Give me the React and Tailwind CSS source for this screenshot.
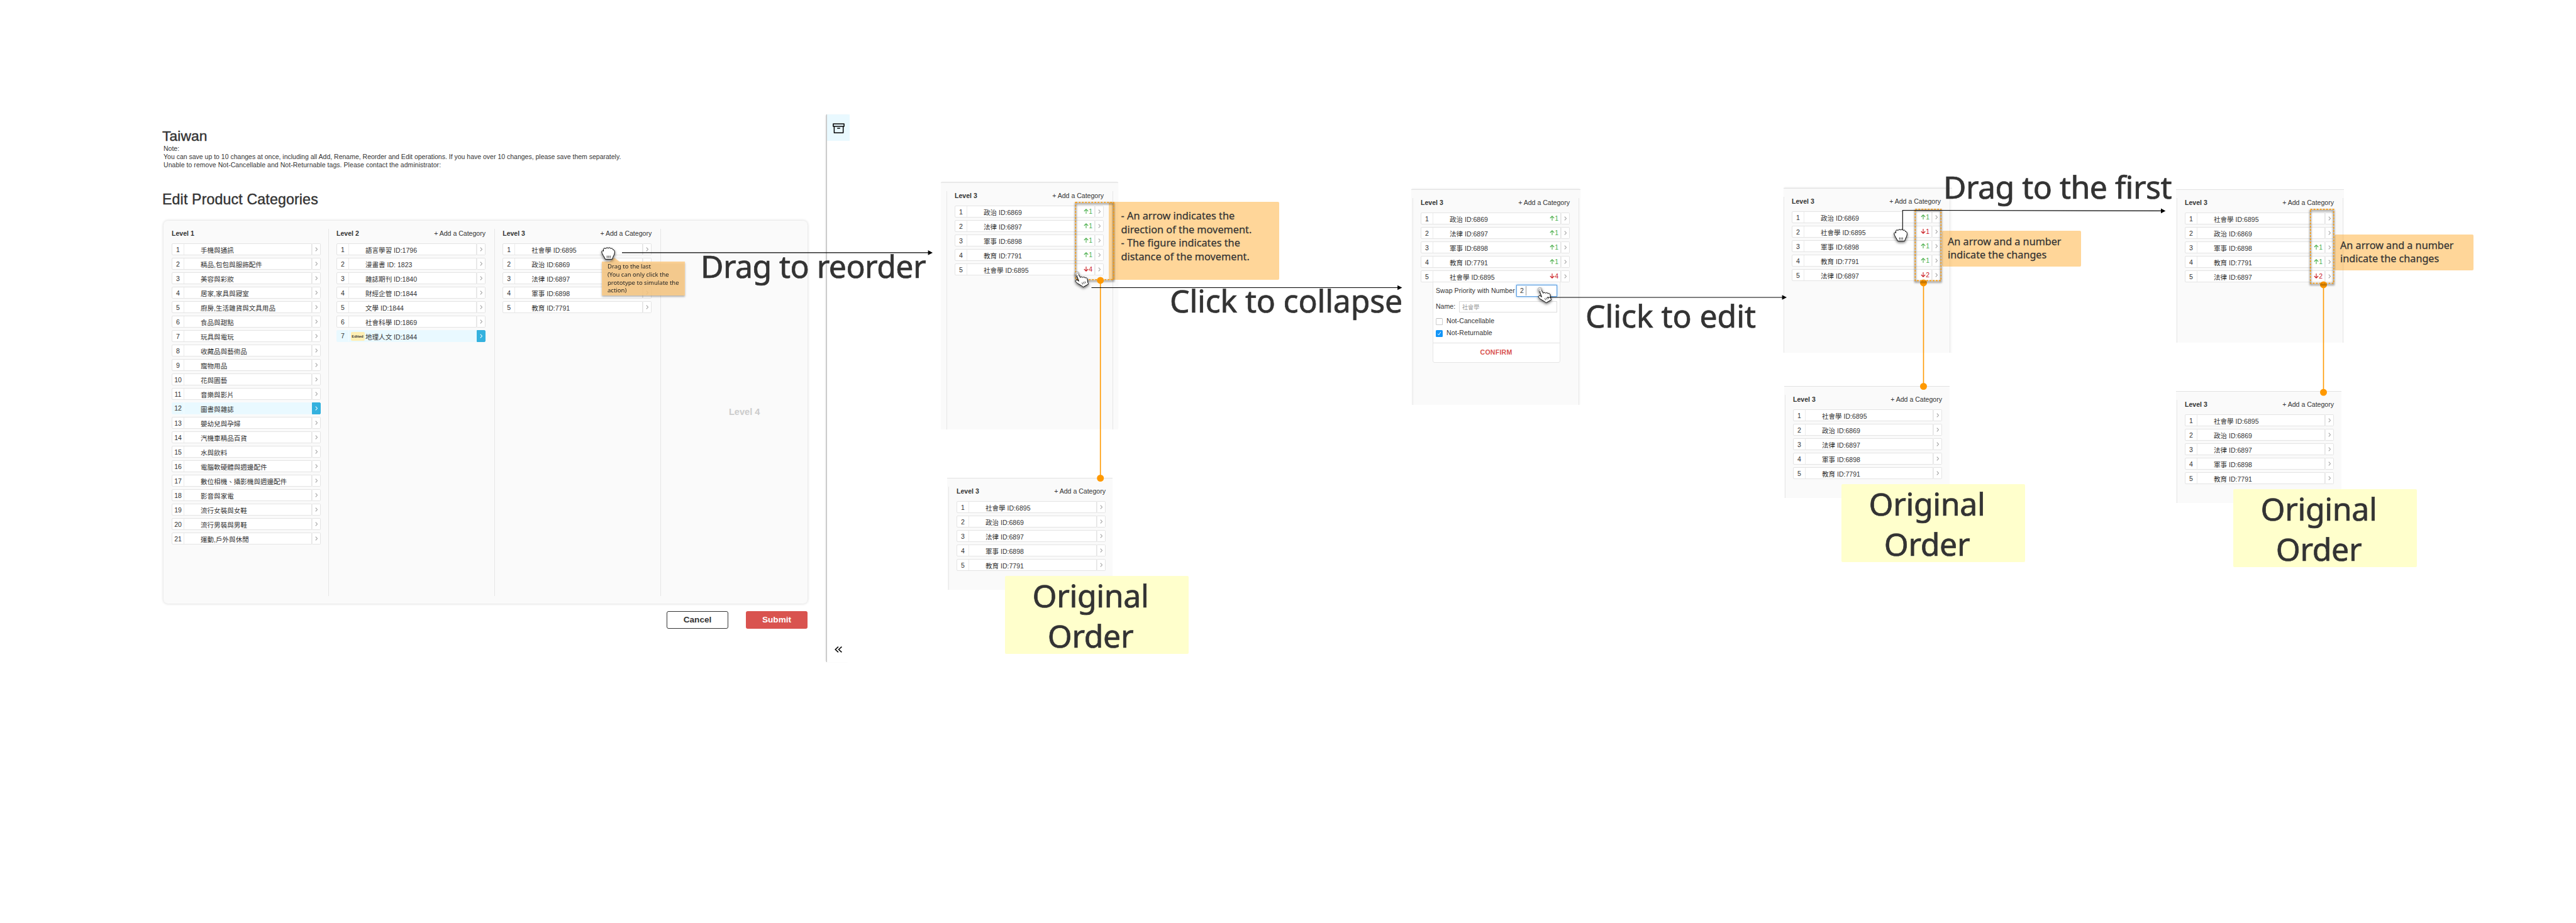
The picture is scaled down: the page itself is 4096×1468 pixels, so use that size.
import clsx from "clsx";

const SANS = "font-['Liberation_Sans','Noto_Sans_CJK_TC',sans-serif]";
const NOTE = "font-['Noto_Sans',sans-serif]";

const LEVEL_1 = [
  "手機與通訊", "精品,包包與服飾配件", "美容與彩妝", "居家,家具與寢室", "廚房,生活雜貨與文具用品",
  "食品與甜點", "玩具與電玩", "收藏品與藝術品", "寵物用品", "花與園藝", "音樂與影片", "圖書與雜誌",
  "嬰幼兒與孕婦", "汽機車精品百貨", "水與飲料", "電腦軟硬體與週邊配件", "數位相機、攝影機與週邊配件",
  "影音與家電", "流行女裝與女鞋", "流行男裝與男鞋", "運動,戶外與休閒",
].map((name, i) => ({ name, active: i === 11 }));

const LEVEL_2 = [
  { name: "語言學習 ID:1796" },
  { name: "漫畫書 ID: 1823" },
  { name: "雜誌期刊 ID:1840" },
  { name: "財經企管 ID:1844" },
  { name: "文學 ID:1844" },
  { name: "社會科學 ID:1869" },
  { name: "地理人文 ID:1844", active: true, edited: true },
];

const SOCIOLOGY = "社會學 ID:6895";
const POLITICS = "政治 ID:6869";
const LAW = "法律 ID:6897";
const MILITARY = "軍事 ID:6898";
const EDUCATION = "教育 ID:7791";

const ORIGINAL = [SOCIOLOGY, POLITICS, LAW, MILITARY, EDUCATION].map((name) => ({ name }));
const REORDERED = [
  { name: POLITICS, move: 1 },
  { name: LAW, move: 1 },
  { name: MILITARY, move: 1 },
  { name: EDUCATION, move: 1 },
  { name: SOCIOLOGY, move: -4 },
];
const SWAPPED = [
  { name: POLITICS, move: 1 },
  { name: SOCIOLOGY, move: -1 },
  { name: MILITARY, move: 1 },
  { name: EDUCATION, move: 1 },
  { name: LAW, move: -2 },
];
const FIRST = [
  { name: SOCIOLOGY },
  { name: POLITICS },
  { name: MILITARY, move: 1 },
  { name: EDUCATION, move: 1 },
  { name: LAW, move: -2 },
];

function Chevron({ active }) {
  return (
    <svg viewBox="0 0 5 8" className={clsx("h-[7px] w-[4.5px]", active ? "stroke-white" : "stroke-[#9a9a9a]")} fill="none" strokeWidth="1.2">
      <path d="M.8 .8 4 4 .8 7.2" />
    </svg>
  );
}

function Move({ value }) {
  const up = value > 0;
  return (
    <span className={clsx("flex items-center text-[10.5px] leading-[14px]", up ? "text-[#4db04f]" : "text-[#c8161d]")}>
      <svg viewBox="0 0 8 8" className={clsx("mr-[0.5px] h-[8px] w-[8px]", !up && "rotate-180")} fill="none" stroke="currentColor" strokeWidth="1.1">
        <path d="M4 8V1M.8 4 4 .8 7.2 4" />
      </svg>
      {Math.abs(value)}
    </span>
  );
}

function Row({ index, name, active, edited, move }) {
  return (
    <li className="flex h-[19px] w-[237px]">
      <div className={clsx("flex flex-1 rounded-l-[2px] border", active ? "border-[#eaf9ff] bg-[#e9f9ff]" : "border-[#e4e4e4] bg-white")}>
        <span className={clsx("w-[19px] border-r text-center leading-[18px]", active ? "-mt-px border-[#f3fcff]" : "border-[#ebebeb]")}>{index}</span>
        <span className="relative flex-1 pl-[26px] leading-[20px] whitespace-nowrap">
          {edited && (
            <span className="absolute top-[2px] left-[2.5px] flex h-[14px] w-[22px] items-center justify-center rounded-[2px] bg-[#ffefb3] text-[6.1px] leading-none font-bold">Edited</span>
          )}
          {name}
        </span>
        {move && <span className="mt-[1px] mr-[3px]"><Move value={move} /></span>}
      </div>
      <div className={clsx("flex w-[14px] items-center justify-center rounded-r-[2px] border", active ? "border-[#34b1de] bg-[#34b1de]" : "border-[#e4e4e4] border-l-[#ededed] bg-white")}>
        <Chevron active={active} />
      </div>
    </li>
  );
}

function Level({ n, rows, add = true, divider = true, children }) {
  return (
    <div className={clsx("pl-[12px] text-[10.55px] text-[#333]", divider && "border-l border-[#e6e6e6]")}>
      <div className="mb-[8px] flex h-[15px] w-[237px] justify-between leading-[15px]">
        <b>Level {n}</b>
        {add && <span>+ Add a Category</span>}
      </div>
      <ol className="flex flex-col gap-[4px]">
        {rows.map((row, i) => <Row key={i} index={i + 1} {...row} />)}
      </ol>
      {children}
    </div>
  );
}

/* A cropped view of the third column, placed freely on the canvas. */
function Board({ place, rows, shade, right, children }) {
  return (
    <section className={clsx("absolute flex flex-row border-t border-[#e2e2e2] bg-[#fafafa] pt-[13px]", SANS, place, shade && "shadow-[0_-2px_2px_-1px_rgba(0,0,0,0.08)]")}>
      <Level n={3} rows={rows}>{children}</Level>
      {right && <div className={clsx("border-l border-[#e6e6e6]", right)} />}
    </section>
  );
}

function EditForm() {
  return (
    <div className="-mt-px ml-[19px] flex h-[129px] w-[203px] flex-col rounded-b-[3px] border border-[#e6e6e6] bg-white">
      <div className="mt-[4px] flex items-center pl-[4px]">
        <span className="w-[128px] tracking-[0.06px] whitespace-nowrap">Swap Priority with Number</span>
        <span className="flex h-[19px] w-[65px] items-center border border-[#5b9fe3] bg-white pl-[5px] shadow-[0_0_3px_rgba(70,150,225,0.8)]">
          2<i className="ml-[3px] h-[15px] w-px bg-[#999]" />
        </span>
      </div>
      <div className="mt-[7px] flex items-center pl-[4px]">
        <span className="w-[37px]">Name:</span>
        <span className="flex h-[18px] w-[156px] items-center border border-[#ddd] pt-[3px] pl-[4px] text-[9.1px] text-[#999]">社會學</span>
      </div>
      <label className="mt-[7px] flex h-[14px] items-center pl-[4px] tracking-[0.07px]">
        <i className="mr-[6px] h-[11px] w-[11px] rounded-[1.5px] border border-[#ccc] border-t-[#bbb] bg-white" />Not-Cancellable
      </label>
      <label className="mt-[5px] flex h-[14px] items-center pl-[4px] tracking-[0.09px]">
        <i className="mr-[6px] flex h-[11px] w-[11px] items-center justify-center rounded-[1.5px] bg-[#1295f8]">
          <svg viewBox="0 0 8 8" className="h-[7px] w-[7px]" fill="none" stroke="white" strokeWidth="1.1"><path d="M1.2 4.4 3.1 6.6 6.8 1" /></svg>
        </i>
        Not-Returnable
      </label>
      <div className="mt-[8px] flex flex-1 items-center justify-center border-t border-[#e2e2e2] pr-[1px] font-bold tracking-[0.25px] text-[#d9534f]">CONFIRM</div>
    </div>
  );
}

function Original({ place }) {
  return (
    <div className={clsx("absolute flex h-[124px] w-[292px] flex-col rounded-[2px] bg-[#ffffcc] pr-[20px] text-center text-[50px] leading-[63.5px] tracking-[-0.4px] text-[#333] [-webkit-text-stroke:0.7px]", NOTE, place)}>
      <span>Original</span>
      <span>Order</span>
    </div>
  );
}

function Caption({ place, children }) {
  return <p className={clsx("absolute text-[50px] leading-[64px] whitespace-nowrap text-[#333] [-webkit-text-stroke:0.7px]", NOTE, place)}>{children}</p>;
}

function ChangeNote({ place }) {
  return (
    <div className={clsx("absolute rounded-[2px] bg-[#ff9900]/40 pt-[7px] pl-[9px] text-[16.2px] leading-[21.3px] whitespace-nowrap text-[#333] [-webkit-text-stroke:0.25px]", NOTE, place)}>
      <p>An arrow and a number</p>
      <p>indicate the changes</p>
    </div>
  );
}

function Frame({ x, y, w, h }) {
  return (
    <g fill="none">
      <rect x={x} y={y + 2} width={w} height={h} stroke="#000" strokeOpacity=".42" strokeWidth="2.5" filter="url(#soft)" />
      <rect x={x} y={y} width={w} height={h} stroke="#ff9900" strokeWidth="1.6" strokeDasharray="2.8 2.2" />
    </g>
  );
}

function Link({ x, y1, y2 }) {
  return (
    <g fill="#ff9900">
      <rect x={x - 0.8} y={y1} width="1.6" height={y2 - y1} />
      <circle cx={x} cy={y1} r="5.5" />
      <circle cx={x} cy={y2} r="5.5" />
    </g>
  );
}

function Arrow({ d, x, y }) {
  return (
    <g>
      <path d={d} fill="none" stroke="#000" strokeWidth="1.1" />
      <path d={`M${x} ${y}l-7.4-3.8v7.6z`} />
    </g>
  );
}

function Fist({ place }) {
  return (
    <svg viewBox="0 0 22 20" className={clsx("absolute h-[20px] w-[22px] overflow-visible drop-shadow-[0_2px_2px_rgba(0,0,0,0.6)]", place)} fill="#fff" stroke="#000" strokeWidth="1" strokeLinejoin="round">
      <path d="M6.5 19.3C5.4 16.2 1 10.6.8 8 .6 6 2.3 5.4 3.5 6.5L3.6 3.4C3.8 1.6 6.2 1.3 7 2.7 7.6.8 10.4.5 11.1 2 12 .4 14.6.7 15.1 2.5 16.6 1.4 18.6 2.3 18.6 4.2 21.3 4.3 21.6 7 21.3 9.2 20.9 13 18.4 15 17.6 19.3Z" />
      <path d="M9.3 13.6v3.6M11.8 13.6v3.6M14.2 13.6v3.6" fill="none" strokeWidth=".8" />
    </svg>
  );
}

function Pointer({ place }) {
  return (
    <svg viewBox="0 0 22.5 25.5" className={clsx("absolute h-[25.5px] w-[22.5px] overflow-visible drop-shadow-[0_2px_2px_rgba(0,0,0,0.6)]", place)} fill="#fff" stroke="#000" strokeWidth="1" strokeLinejoin="round">
      <path d="M2.6 5C1.7 2.6 4.8 1.7 5.8 3.8L8.8 9.4C9.7 8 12 8 12.6 9.5 13.6 8 16 8.5 16.4 10.1 17.8 9.2 19.7 10 20 12L20.5 16C20.8 18 21.2 18.6 21.8 19.8L13.2 24.7C12.2 22.9 10.8 22.6 9.2 21.6 6.6 19.8 2.2 18 1.2 15.4.8 13.6 2.8 12.6 4.4 13.8L6.4 15.3Z" />
      <path d="M11.4 17.4l1.3 3M13.7 16.4l1.3 3M16 15.6l1.2 2.8" fill="none" strokeWidth=".8" />
      <circle cx="3.6" cy="3.4" r="3.2" fill="#fff" fillOpacity=".6" stroke="#777" strokeWidth=".6" />
    </svg>
  );
}

function Editor() {
  return (
    <div className={clsx("absolute top-[202px] left-[258px] w-[1027px] text-[#333]", SANS)}>
      <h1 className="text-[22.8px] leading-[28px] tracking-[0.1px] [-webkit-text-stroke:0.4px]">Taiwan</h1>
      <div className="pl-[2px] text-[10.5px] leading-[12.9px] whitespace-nowrap">
        <p>Note:</p>
        <p>You can save up to 10 changes at once, including all Add, Rename, Reorder and Edit operations. If you have over 10 changes, please save them separately.</p>
        <p className="tracking-[0.05px]">Unable to remove Not-Cancellable and Not-Returnable tags. Please contact the administrator:</p>
      </div>
      <h2 className="mt-[33px] text-[23.2px] leading-[30px] tracking-[0.13px] [-webkit-text-stroke:0.4px]">Edit Product Categories</h2>
      <div className="mt-[19.3px] ml-[2px] flex h-[609px] w-[1024px] rounded-[7px] bg-[#fafafa] pt-[13px] pb-[12px] shadow-[0_0_4px_rgba(0,0,0,0.18)]">
        <div className="w-[262px] pl-px"><Level n={1} rows={LEVEL_1} add={false} divider={false} /></div>
        <div className="flex w-[264.2px]"><Level n={2} rows={LEVEL_2} /></div>
        <div className="flex w-[264.2px]"><Level n={3} rows={ORIGINAL} /></div>
        <div className="flex flex-1 items-center justify-center border-l border-[#e6e6e6] pl-[32px] text-[14.6px] font-bold text-[#ccc]">Level 4</div>
      </div>
      <div className="mt-[12px] flex justify-end gap-[28px] pr-px text-[13.6px] font-bold">
        <button className="h-[28px] w-[98px] rounded-[3px] border border-[#333] bg-white">Cancel</button>
        <button className="h-[28px] w-[98px] rounded-[3px] bg-[#d9534f] text-white">Submit</button>
      </div>
    </div>
  );
}

function Sidebar() {
  return (
    <aside className="absolute top-[182px] left-[1314px] flex h-[871px] w-[37px] flex-col justify-between border-l border-[#bdbdbd] shadow-[-2px_0_2px_-1px_rgba(0,0,0,0.18)]">
      <div className="flex h-[42px] items-center justify-center bg-[#e9f9ff] pt-[1px]">
        <svg viewBox="0 0 19 16" className="h-[16px] w-[19px]" fill="none" stroke="#000" strokeWidth="1.5" strokeLinejoin="round">
          <path d="M.9.9h17.2v4.2H.9zM2.4 5.1h14.3v10.1H2.4z" />
          <path d="M7.2 8h4.6" />
        </svg>
      </div>
      <svg viewBox="0 0 12 10" className="mb-[15px] ml-[12px] h-[10px] w-[12px]" fill="none" stroke="#000" strokeWidth="1.5">
        <path d="M6 .6 1.2 5 6 9.4M11.4.6 6.6 5l4.8 4.4" />
      </svg>
    </aside>
  );
}

export default function App() {
  return (
    <main className="relative h-[1468px] w-[4096px] overflow-hidden bg-white">
      <Editor />
      <Sidebar />

      <Board place="top-[290px] left-[1496px] h-[393px] w-[282px] pl-[9px]" rows={REORDERED} shade right="ml-[14px]" />
      <Board place="top-[760px] left-[1506px] h-[178px] w-[263px] pl-[2px]" rows={ORIGINAL} />
      <Board place="top-[301px] left-[2244px] h-[343px] w-[269px] pl-[2px]" rows={REORDERED} shade right="ml-[14px]"><EditForm /></Board>
      <Board place="top-[299px] left-[2836px] h-[262px] w-[268px]" rows={SWAPPED} shade right="ml-[14px]" />
      <Board place="top-[614px] left-[2837px] h-[178px] w-[263px] pl-[1px]" rows={ORIGINAL} />
      <Board place="top-[301px] left-[3460px] h-[244px] w-[267px] pl-[1px]" rows={FIRST} right="ml-[14px]" />
      <Board place="top-[622px] left-[3460px] h-[178px] w-[263px] pl-[1px]" rows={ORIGINAL} />

      <div className={clsx("absolute top-[321px] left-[1763px] h-[124px] w-[271px] rounded-[2px] bg-[#ff9900]/40 pt-[12px] pl-[19.5px] text-[16.3px] leading-[21.5px] whitespace-nowrap text-[#333] [-webkit-text-stroke:0.25px]", NOTE)}>
        <p>- An arrow indicates the</p>
        <p>direction of the movement.</p>
        <p>- The figure indicates the</p>
        <p>distance of the movement.</p>
      </div>
      <ChangeNote place="top-[367px] left-[3088px] h-[57px] w-[221px]" />
      <ChangeNote place="top-[372.5px] left-[3712px] h-[57px] w-[221px]" />

      <svg viewBox="0 0 4096 1468" className="pointer-events-none absolute inset-0 h-[1468px] w-[4096px]">
        <defs>
          <filter id="soft" x="-20%" y="-20%" width="140%" height="140%"><feGaussianBlur stdDeviation="1.5" /></filter>
        </defs>
        <Link x={3058.5} y1={449.9} y2={614.5} />
        <Link x={3694.5} y1={452.9} y2={624} />
        <Frame x={1710.3} y={321.8} w={60.4} h={123} />
        <Frame x={3045.3} y={332.8} w={41} h={113.6} />
        <Frame x={3673.7} y={332.9} w={37} h={117.6} />
        <Link x={1749.7} y1={445.9} y2={760.5} />
        <Arrow d="M989 401.9H1476" x={1483} y={401.9} />
        <Arrow d="M1735.5 457.5H2223" x={2229.5} y={457.5} />
        <Arrow d="M3025.3 366V334.5L3437 335.4" x={3443.4} y={335.4} />
      </svg>

      <div className="absolute top-[410px] left-[957px] flex w-[132px] flex-col drop-shadow-[0_2px_1.5px_rgba(0,0,0,0.35)]">
        <i className="ml-[12px] h-[6px] w-[16px] bg-[#fecc86]/85 [clip-path:polygon(50%_0,100%_100%,0_100%)]" />
        <div className={clsx("h-[54px] bg-[#fecc86]/85 pt-[2px] pl-[9px] text-[9.5px] leading-[12.8px] whitespace-nowrap text-[#222]", NOTE)}>
          <p>Drag to the last</p>
          <p>(You can only click the</p>
          <p>prototype to simulate the</p>
          <p>action)</p>
        </div>
      </div>

      <Fist place="top-[392.5px] left-[956px]" />
      <Fist place="top-[364px] left-[3010.5px]" />
      <Pointer place="top-[432px] left-[1709px]" />
      <Pointer place="top-[457px] left-[2445px]" />
      <svg viewBox="0 0 382 8" className="absolute top-[468.6px] left-[2460px] h-[8px] w-[382px]">
        <Arrow d="M0 4H375" x={381} y={4} />
      </svg>

      <Original place="top-[916px] left-[1598px]" />
      <Original place="top-[770px] left-[2928px]" />
      <Original place="top-[778px] left-[3551px]" />

      <Caption place="top-[391px] left-[1114px] tracking-[-0.57px]">Drag to reorder</Caption>
      <Caption place="top-[446px] left-[1860px] tracking-[-0.2px]">Click to collapse</Caption>
      <Caption place="top-[470px] left-[2521px] tracking-[-0.1px]">Click to edit</Caption>
      <Caption place="top-[265px] left-[3090px] tracking-[-0.54px]">Drag to the first</Caption>
    </main>
  );
}
